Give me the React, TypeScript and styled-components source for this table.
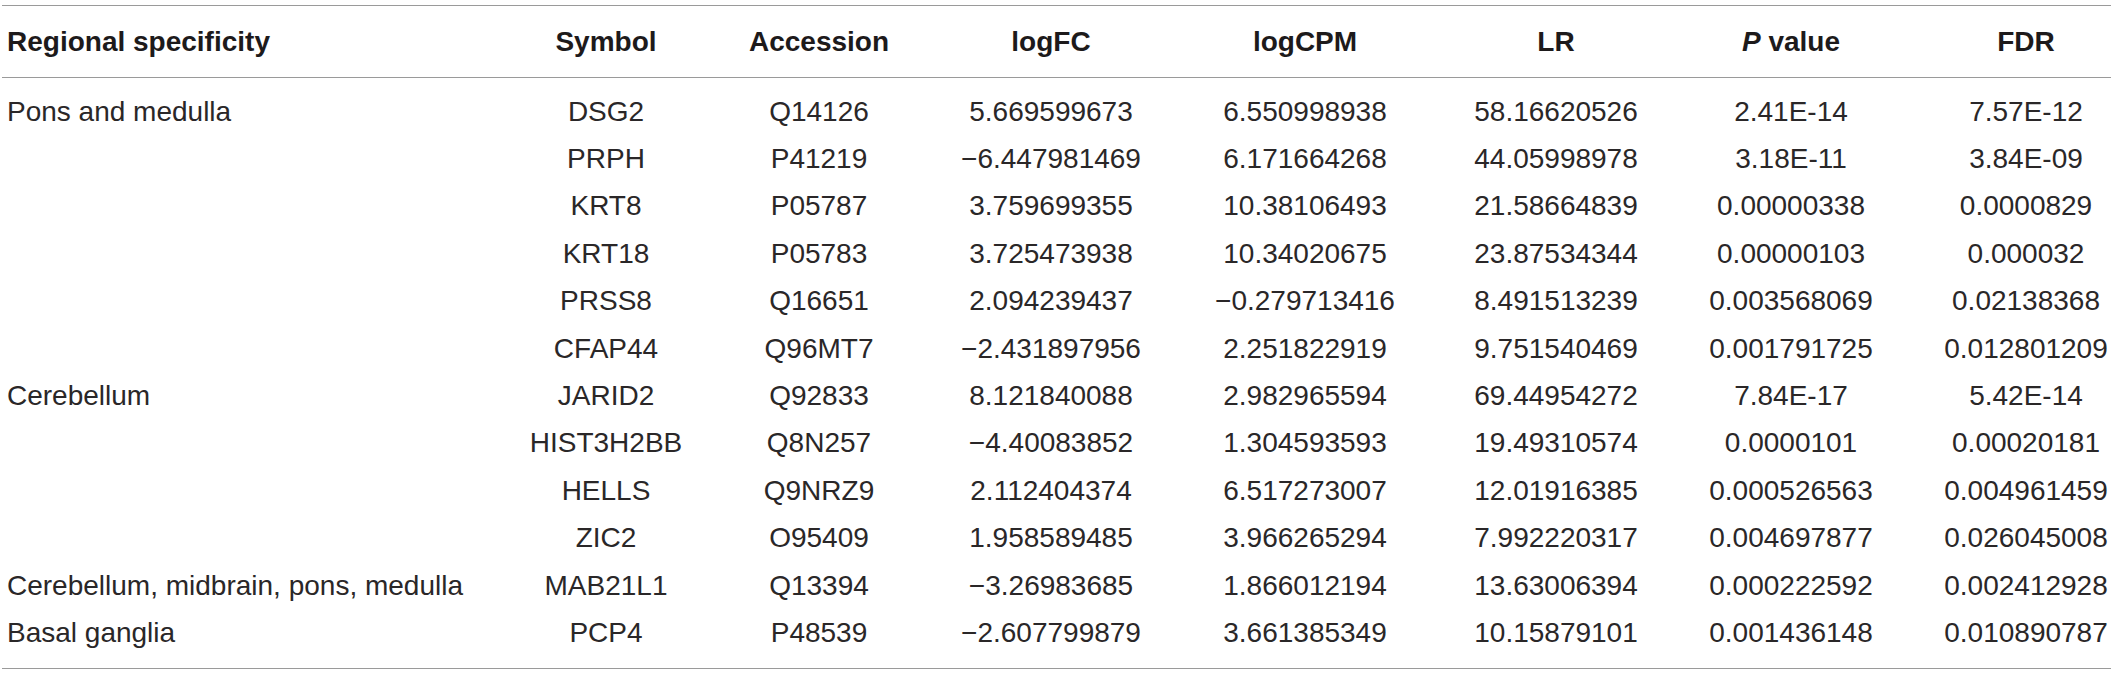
import React from "react";
import styled, { createGlobalStyle } from "styled-components";

const GlobalStyle = createGlobalStyle`
  html, body {
    margin: 0;
    padding: 0;
    background: #ffffff;
  }
  body {
    font-family: "Liberation Sans", Arial, Helvetica, sans-serif;
    color: #231f20;
  }
`;

const COLUMNS = "498px 212px 214px 250px 258px 244px 226px 1fr";

const Table = styled.div`
  width: 2109px;
  margin: 5px 6px 0 2px;
  border-top: 1px solid #9a9a9a;
  border-bottom: 1px solid #9a9a9a;
  font-size: 28px;
`;

const HeaderRow = styled.div`
  display: grid;
  grid-template-columns: ${COLUMNS};
  height: 71px;
  align-items: center;
  border-bottom: 1px solid #9a9a9a;
`;

const Body = styled.div`
  padding: 10px 0 11px;
`;

const Row = styled.div`
  display: grid;
  grid-template-columns: ${COLUMNS};
  height: 47.4px;
  align-items: center;
`;

const HeadCell = styled.div<{ $left?: boolean; $last?: boolean }>`
  font-weight: 700;
  color: #1d1a1b;
  line-height: 1;
  white-space: nowrap;
  text-align: ${(p) => (p.$left ? "left" : "center")};
  padding-left: ${(p) => (p.$left ? "5px" : p.$last ? "37px" : "0")};
`;

const Cell = styled.div<{ $left?: boolean; $last?: boolean }>`
  font-weight: 400;
  color: #2a2728;
  line-height: 1;
  white-space: nowrap;
  text-align: ${(p) => (p.$left ? "left" : "center")};
  padding-left: ${(p) => (p.$left ? "5px" : p.$last ? "37px" : "0")};
`;

const Italic = styled.span`
  font-style: italic;
`;

const headers: React.ReactNode[] = [
  "Regional specificity",
  "Symbol",
  "Accession",
  "logFC",
  "logCPM",
  "LR",
  <>
    <Italic>P</Italic> value
  </>,
  "FDR",
];

const rows: string[][] = [
  ["Pons and medulla", "DSG2", "Q14126", "5.669599673", "6.550998938", "58.16620526", "2.41E-14", "7.57E-12"],
  ["", "PRPH", "P41219", "\u22126.447981469", "6.171664268", "44.05998978", "3.18E-11", "3.84E-09"],
  ["", "KRT8", "P05787", "3.759699355", "10.38106493", "21.58664839", "0.00000338", "0.0000829"],
  ["", "KRT18", "P05783", "3.725473938", "10.34020675", "23.87534344", "0.00000103", "0.000032"],
  ["", "PRSS8", "Q16651", "2.094239437", "\u22120.279713416", "8.491513239", "0.003568069", "0.02138368"],
  ["", "CFAP44", "Q96MT7", "\u22122.431897956", "2.251822919", "9.751540469", "0.001791725", "0.012801209"],
  ["Cerebellum", "JARID2", "Q92833", "8.121840088", "2.982965594", "69.44954272", "7.84E-17", "5.42E-14"],
  ["", "HIST3H2BB", "Q8N257", "\u22124.40083852", "1.304593593", "19.49310574", "0.0000101", "0.00020181"],
  ["", "HELLS", "Q9NRZ9", "2.112404374", "6.517273007", "12.01916385", "0.000526563", "0.004961459"],
  ["", "ZIC2", "O95409", "1.958589485", "3.966265294", "7.992220317", "0.004697877", "0.026045008"],
  ["Cerebellum, midbrain, pons, medulla", "MAB21L1", "Q13394", "\u22123.26983685", "1.866012194", "13.63006394", "0.000222592", "0.002412928"],
  ["Basal ganglia", "PCP4", "P48539", "\u22122.607799879", "3.661385349", "10.15879101", "0.001436148", "0.010890787"],
];

export default function App() {
  return (
    <>
      <GlobalStyle />
      <Table>
        <HeaderRow>
          {headers.map((h, i) => (
            <HeadCell key={i} $left={i === 0} $last={i === headers.length - 1}>
              {h}
            </HeadCell>
          ))}
        </HeaderRow>
        <Body>
          {rows.map((r, ri) => (
            <Row key={ri}>
              {r.map((c, ci) => (
                <Cell key={ci} $left={ci === 0} $last={ci === r.length - 1}>
                  {c}
                </Cell>
              ))}
            </Row>
          ))}
        </Body>
      </Table>
    </>
  );
}
